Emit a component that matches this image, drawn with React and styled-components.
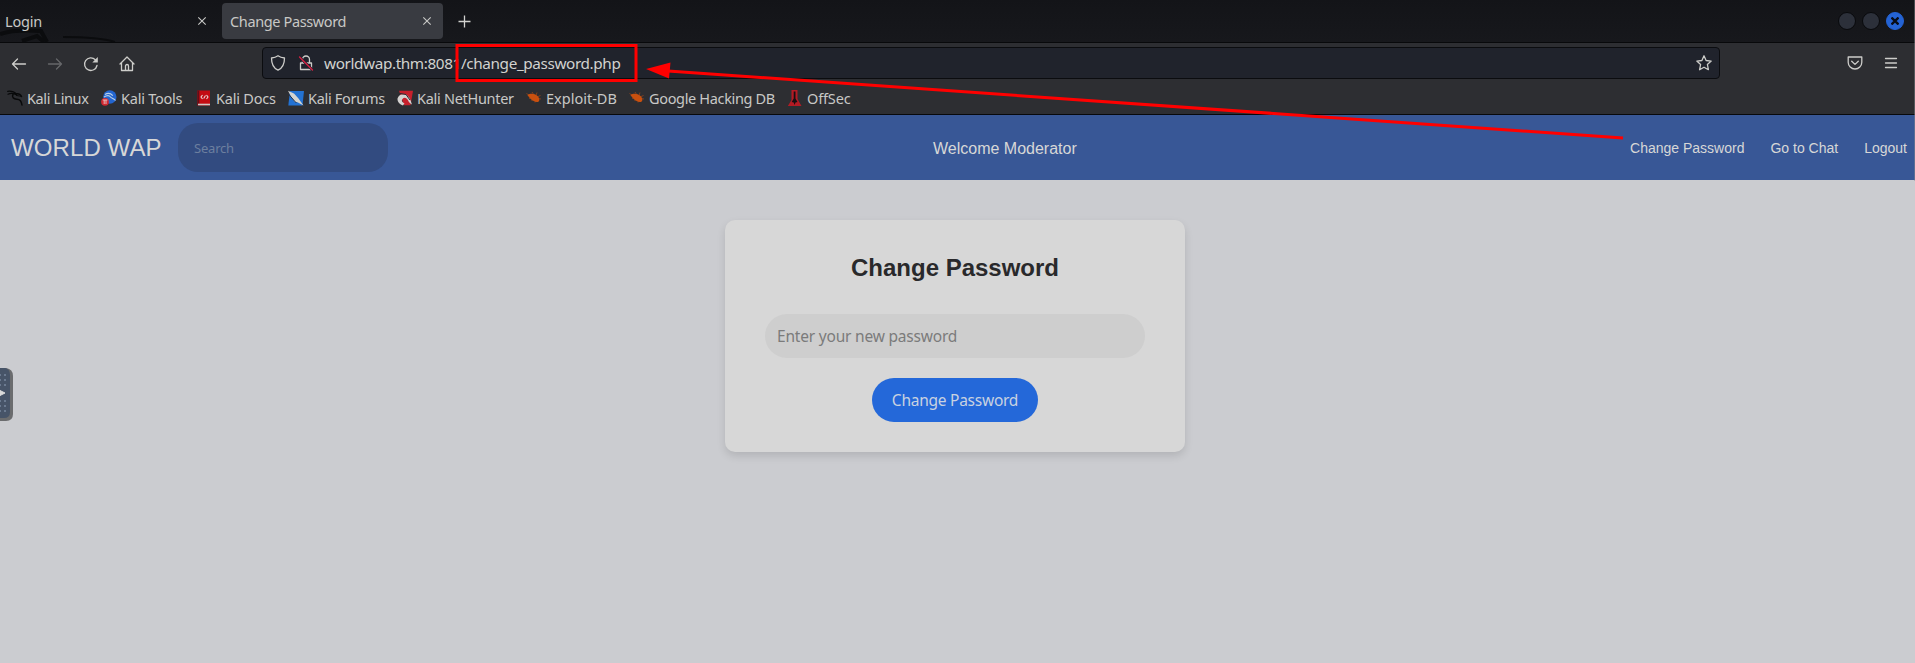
import React from "react";
import styled, { createGlobalStyle } from "styled-components";

const ui = `"Noto Sans", "Open Sans", sans-serif`;
const web = `"Liberation Sans", Arial, sans-serif`;

const Global = createGlobalStyle`
  * { box-sizing: border-box; }
  html, body, #root { margin: 0; height: 100%; }
  body { overflow: hidden; background: #cbccd0; font-family: ${ui}; }
`;

const Window = styled.div`
  position: relative;
  display: flex;
  flex-direction: column;
  width: 1915px;
  height: 663px;
  overflow: hidden;
`;

const WindowEdge = styled.div`
  position: absolute;
  top: 0;
  right: 0;
  width: 1px;
  height: 181px;
  background: rgba(140, 142, 146, 0.45);
`;

const TabBar = styled.div`
  position: relative;
  display: flex;
  align-items: center;
  flex: none;
  height: 43px;
  border-bottom: 1px solid #08090b;
  background: linear-gradient(#131418, #17181c);
`;

const Watermark = styled.svg`
  position: absolute;
  left: 0;
  top: 26px;
`;

const Tab = styled.div`
  position: relative;
  display: flex;
  align-items: center;
  justify-content: space-between;
  width: ${(p) => p.$width}px;
  height: 36px;
  padding: 0 ${(p) => p.$end}px 0 ${(p) => p.$start}px;
  border-radius: 4px;
  margin-right: ${(p) => p.$gap}px;
  background: ${(p) => (p.$active ? "#393b41" : "transparent")};
  color: #c8c8c6;
`;

const Label = styled.span`
  font: 14.5px/20px ${ui};
  white-space: nowrap;
  letter-spacing: ${(p) => p.$track || 0}px;
`;

const WindowButtons = styled.div`
  display: flex;
  gap: 6px;
  margin-left: auto;
  padding-right: 11px;
`;

const WindowButton = styled.div`
  display: grid;
  place-items: center;
  width: 18px;
  height: 18px;
  border-radius: 50%;
  border: 1px solid ${(p) => (p.$close ? "#2463d4" : "#08090c")};
  background: ${(p) => (p.$close ? "#2463d4" : "#2c303a")};
`;

const Toolbar = styled.div`
  display: flex;
  align-items: center;
  flex: none;
  height: 40px;
  background: #2d2e32;
`;

const NavButtons = styled.div`
  display: flex;
  gap: 20px;
  width: 262px;
  padding: 1px 0 0 11px;
`;

const AddressBar = styled.div`
  display: flex;
  align-items: center;
  width: 1458px;
  height: 32px;
  border: 1px solid #0b0c0f;
  border-radius: 4px;
  background: #20232c;
  color: #d2d2cf;
  padding: 0 7px;
`;

const Address = styled.span`
  margin-left: 10px;
  padding-bottom: 1px;
  font: 15.3px/22px ${ui};
  letter-spacing: -0.38px;
  white-space: nowrap;
`;

const LockSlot = styled.div`
  display: flex;
  margin-left: 12px;
`;

const StarSlot = styled.div`
  display: flex;
  margin-left: auto;
`;

const ToolbarEnd = styled.div`
  display: flex;
  gap: 20px;
  margin-left: auto;
  padding-right: 16px;
`;

const Bookmarks = styled.div`
  display: flex;
  align-items: center;
  flex: none;
  height: 32px;
  padding: 0 0 1px 7px;
  background: #2d2e32;
  border-bottom: 1px solid #08090b;
  color: #c8c8c6;
`;

const Bookmark = styled.div`
  display: flex;
  align-items: center;
  gap: 4px;
  flex: none;
  width: ${(p) => p.$width}px;
`;

const SiteHeader = styled.header`
  display: flex;
  align-items: center;
  flex: none;
  height: 65px;
  padding: 0 8px 0 11px;
  background: #385796;
  color: #d7d7d7;
  font-family: ${web};
`;

const Brand = styled.div`
  width: 167px;
  font-size: 24px;
  line-height: 28px;
  letter-spacing: 0.1px;
  white-space: nowrap;
`;

const Search = styled.div`
  display: flex;
  align-items: center;
  width: 210px;
  height: 49px;
  padding: 1px 16px 0;
  border-radius: 20px;
  background: #324b80;
  color: #6c7f9f;
  font: 13px/18px ${ui};
  letter-spacing: -0.2px;
`;

const Welcome = styled.div`
  margin-left: 545px;
  padding-top: 2px;
  width: 300px;
  font-size: 16px;
`;

const Links = styled.nav`
  display: flex;
  gap: 26px;
  margin-left: auto;
  font-size: 14px;
  white-space: nowrap;
`;

const Page = styled.main`
  flex: 1;
  padding: 40px 0 0 725px;
  background: #cbccd0;
`;

const Card = styled.section`
  display: flex;
  flex-direction: column;
  align-items: center;
  width: 460px;
  height: 232px;
  padding: 34px 40px 30px;
  border-radius: 10px;
  background: #d7d7d7;
  box-shadow: 0 4px 8px rgba(0, 0, 0, 0.12);
`;

const Title = styled.h1`
  margin: 0 0 32px;
  height: 28px;
  font: bold 24px/28px ${web};
  color: #29292b;
  white-space: nowrap;
`;

const Field = styled.div`
  display: flex;
  align-items: center;
  width: 380px;
  height: 44px;
  margin-bottom: 20px;
  padding: 0 12px;
  border-radius: 22px;
  background: #cecece;
  color: #7b7b7b;
  font: 15.5px/22px ${ui};
  letter-spacing: -0.2px;
`;

const Submit = styled.div`
  display: flex;
  align-items: center;
  justify-content: center;
  width: 166px;
  height: 44px;
  border-radius: 22px;
  background: #2468d9;
  color: #c9d2e0;
  font: 15.5px/22px ${ui};
  letter-spacing: -0.25px;
  white-space: nowrap;
`;

const Annotation = styled.svg`
  position: absolute;
  left: 0;
  top: 0;
  pointer-events: none;
`;

const SideHandle = styled.svg`
  position: absolute;
  left: 0;
  top: 367px;
`;

const Line = ({ size = 16, color = "#cdcdca", children, w = 1.3 }) => (
  <svg width={size} height={size} viewBox="0 0 16 16" fill="none" stroke={color} strokeWidth={w} strokeLinecap="round" strokeLinejoin="round">
    {children}
  </svg>
);

const Close = () => (
  <svg width="10" height="10" viewBox="0 0 10 10" stroke="#c8c8c6" strokeWidth="1.1">
    <path d="M1.3 1.3l7.4 7.4M8.7 1.3L1.3 8.7" />
  </svg>
);

const Dragon = ({ color }) => (
  <g fill="none" stroke={color} strokeLinecap="round">
    <path d="M.7 1.3C4 .8 7.500 2 9.500 4.200M1 4.200C4 2.700 7 3.200 9.800 5" strokeWidth="1.200" />
    <path d="M9 4c2.500-.6 4.200.1 5.500 2.500M6 4.500C4.500 7 6.500 9.300 10 9.200c3 0 4.500 2.200 5 5.800" strokeWidth="1.500" />
    <path d="M9.500 5.500c2 .2 3.400.7 5 .9" strokeWidth="1" />
  </g>
);

const Beetle = () => (
  <g>
    <path d="M2 5l3 1M3 8.500l3-1M6 2l2 3M11 2.500l-1 3M14.500 5.500L11 7M15 9L12 8.500M5.500 11l2-2M9 12.500l.5-2M.5 3.500l3 2" stroke="#98451b" strokeWidth=".8" />
    <path d="M1.500 5.200C4 3 8.500 3.500 11.500 6c2 1.900 2.300 4.500 1.200 5.400-1.800 1.200-5 .2-7.200-1.600C4 8.400 2.500 6.800 1.500 5.200z" fill="#c9500f" />
  </g>
);

const art = {
  linux: <Dragon color="#08090a" />,
  tools: (
    <g>
      <circle cx="8.800" cy="7" r="6.700" fill="#2365cf" />
      <path d="M4 4.500c3-1.800 6-.8 7.800 1.200M3 7c3-2 5.500-1.500 6.500 0s3 1 5 3.500" stroke="#b9cfe8" strokeWidth="1.100" fill="none" />
      <circle cx="4" cy="11.800" r="3.900" fill="#d02830" />
      <path d="M1.800 10h4.600M3.200 10v4M5 10v4" stroke="#e5c8c8" strokeWidth=".9" />
    </g>
  ),
  docs: (
    <g>
      <path d="M1.500.5h12.500v15H1.500z" fill="#c30c12" />
      <path d="M1.500.5h1.800v15H1.500z" fill="#650d16" />
      <path d="M2 13.700h12v1.600H2z" fill="#cfc8c6" />
      <path d="M6.500 5L5 7l1.500 2M10.500 5L12 7l-1.500 2M7.700 8.500L9.500 5.500" stroke="#e8d5d3" strokeWidth="1.100" fill="none" />
    </g>
  ),
  forums: (
    <g>
      <path d="M2 1h14l-1.500 14.500H.3z" fill="#2372d2" />
      <path d="M0 .8L6 3.500l4.500 5L15.500 15.500l-6-3.300L7 12 3.500 7.500z" fill="#d4d4d0" />
      <path d="M0 3.500l6.500 7.500 2 2" stroke="#253044" strokeWidth="1" fill="none" />
    </g>
  ),
  nethunter: (
    <g>
      <path d="M2 .8H16l-2.500 14.500H7z" fill="#c7202c" />
      <path d="M.5 8.500C1.500 5 5 3.500 8.500 4.500c3.500 1.300 5 5 6.500 10-2-1-3-2-4-4.200C9.800 7.700 7 7 5.500 9s0 3.500 2 4.200L6 15.500C3 14.500.2 12 .5 8.500z" fill="#d5d3d1" />
      <path d="M3 3.500l6 1 4 5.500" stroke="#292b31" strokeWidth="1" fill="none" />
    </g>
  ),
  beetle: <Beetle />,
  offsec: (
    <g>
      <path d="M4.500 0h6v9l4 7H.8L4.500 10z" fill="#b31b24" />
      <path d="M6.700 1.500h1.800v7l2 3.500-2 .5-.9 2.500-.9-2.500-2-.5 2-3.500z" fill="#180e12" />
    </g>
  ),
};

const bookmarks = [
  { name: "Kali Linux", icon: "linux", width: 94, track: -0.38 },
  { name: "Kali Tools", icon: "tools", width: 95, track: -0.23 },
  { name: "Kali Docs", icon: "docs", width: 92, track: -0.22 },
  { name: "Kali Forums", icon: "forums", width: 109, track: -0.3 },
  { name: "Kali NetHunter", icon: "nethunter", width: 129, track: -0.29 },
  { name: "Exploit-DB", icon: "beetle", width: 103, track: 0 },
  { name: "Google Hacking DB", icon: "beetle", width: 158, track: -0.34 },
  { name: "OffSec", icon: "offsec", width: 70, track: -0.15 },
];

export default function App() {
  return (
    <Window>
      <Global />
      <TabBar>
        <Watermark width="120" height="16" fill="none" stroke="#0b0c0e">
          <path d="M0 8C12 4 26 4 41 5l6 11M22 15l15-5 7 6" strokeWidth="4" />
          <path d="M63 11c20 0 39 1 52 5" strokeWidth="2" />
        </Watermark>
        <Tab $width={212} $start={5} $end={5} $gap={10}>
          <Label $track={-0.2}>Login</Label>
          <Close />
        </Tab>
        <Tab $active $width={221} $start={8} $end={11} $gap={15}>
          <Label $track={-0.37}>Change Password</Label>
          <Close />
        </Tab>
        <svg width="13" height="13" stroke="#d2d2cf" strokeWidth="1.3">
          <path d="M6.500 .5v12M.5 6.500h12" />
        </svg>
        <WindowButtons>
          <WindowButton />
          <WindowButton />
          <WindowButton $close>
            <svg width="8" height="8" stroke="#080c16" strokeWidth="2.300">
              <path d="M.5 .5l7 7M7.500 .5l-7 7" />
            </svg>
          </WindowButton>
        </WindowButtons>
      </TabBar>

      <Toolbar>
        <NavButtons>
          <Line><path d="M14.500 8H1.500M6.500 3L1.500 8l5 5" /></Line>
          <Line color="#66676a"><path d="M1.500 8h13M9.500 3l5 5-5 5" /></Line>
          <Line>
            <path d="M14 9.500A6.300 6.300 0 1 1 12.300 3.700" />
            <path d="M14.800 1v5.500H9.300z" fill="#cdcdca" stroke="none" />
          </Line>
          <Line><path d="M1 8l7-7 7 7M2.500 7v7.500h11V7M6.500 14.500V10a1.500 1.500 0 0 1 3 0v4.500" /></Line>
        </NavButtons>
        <AddressBar>
          <Line><path d="M8 .8c2 1.500 4 2 6.500 2.200 0 6-1.500 10-6.500 12.200C3 13 1.500 9 1.500 3 4 2.800 6 2.300 8 .8z" /></Line>
          <LockSlot>
            <Line>
              <path d="M4.500 7V4.500a3.500 3.500 0 0 1 7 0V7M2.500 8h11v6.500h-11z" />
              <path d="M1.500 2l13 13" stroke="#20232c" strokeWidth="2.600" />
              <path d="M1.500 2l13 13" stroke="#d51f43" strokeWidth="1.400" />
            </Line>
          </LockSlot>
          <Address>worldwap.thm:8081/change_password.php</Address>
          <StarSlot>
            <Line><path d="M8 .8l2.100 4.700 5.100.6-3.800 3.400 1 5.200L8 12.200l-4.400 2.500 1-5.200L.8 6.100l5.100-.6z" /></Line>
          </StarSlot>
        </AddressBar>
        <ToolbarEnd>
          <Line>
            <path d="M1.200 2h13.600v5.200a6.800 6.800 0 0 1-13.600 0zM4.700 6.200L8 9.400l3.300-3.200" />
          </Line>
          <Line><path d="M2.500 3.500h11M2.500 8h11M2.500 12.500h11" /></Line>
        </ToolbarEnd>
      </Toolbar>

      <Bookmarks>
        {bookmarks.map((b) => (
          <Bookmark key={b.name} $width={b.width}>
            <svg width="16" height="16" viewBox="0 0 16 16">{art[b.icon]}</svg>
            <Label $track={b.track}>{b.name}</Label>
          </Bookmark>
        ))}
      </Bookmarks>

      <SiteHeader>
        <Brand>WORLD WAP</Brand>
        <Search>Search</Search>
        <Welcome>Welcome Moderator</Welcome>
        <Links>
          <span>Change Password</span>
          <span>Go to Chat</span>
          <span>Logout</span>
        </Links>
      </SiteHeader>

      <Page>
        <Card>
          <Title>Change Password</Title>
          <Field>Enter your new password</Field>
          <Submit>Change Password</Submit>
        </Card>
      </Page>

      <WindowEdge />

      <SideHandle width="14" height="55">
        <path d="M0 1h6q7 1 7 8v38q0 7-7 7H0z" fill="#6b6c6e" />
        <path d="M0 1h5q5 1 5 7v37q0 6-6 6H0z" fill="#475468" />
        <path d="M0 23.500l5 2.500-5 2.500z" fill="#dadada" stroke="#dadada" />
        <g fill="#6b7a90">
          {[7, 12, 17, 33, 38, 43].map((y) => (
            <React.Fragment key={y}>
              <rect x="0" y={y} width="1" height="2" />
              <rect x="4" y={y} width="2" height="2" />
            </React.Fragment>
          ))}
        </g>
      </SideHandle>

      <Annotation width="1915" height="663">
        <rect x="457" y="45.500" width="179" height="35" fill="none" stroke="#ff0000" strokeWidth="3" />
        <path d="M668 71L1623 138" stroke="#ff0000" strokeWidth="3" />
        <path d="M646 69l24.500-6.500-1.500 16z" fill="#ff0000" />
      </Annotation>
    </Window>
  );
}
